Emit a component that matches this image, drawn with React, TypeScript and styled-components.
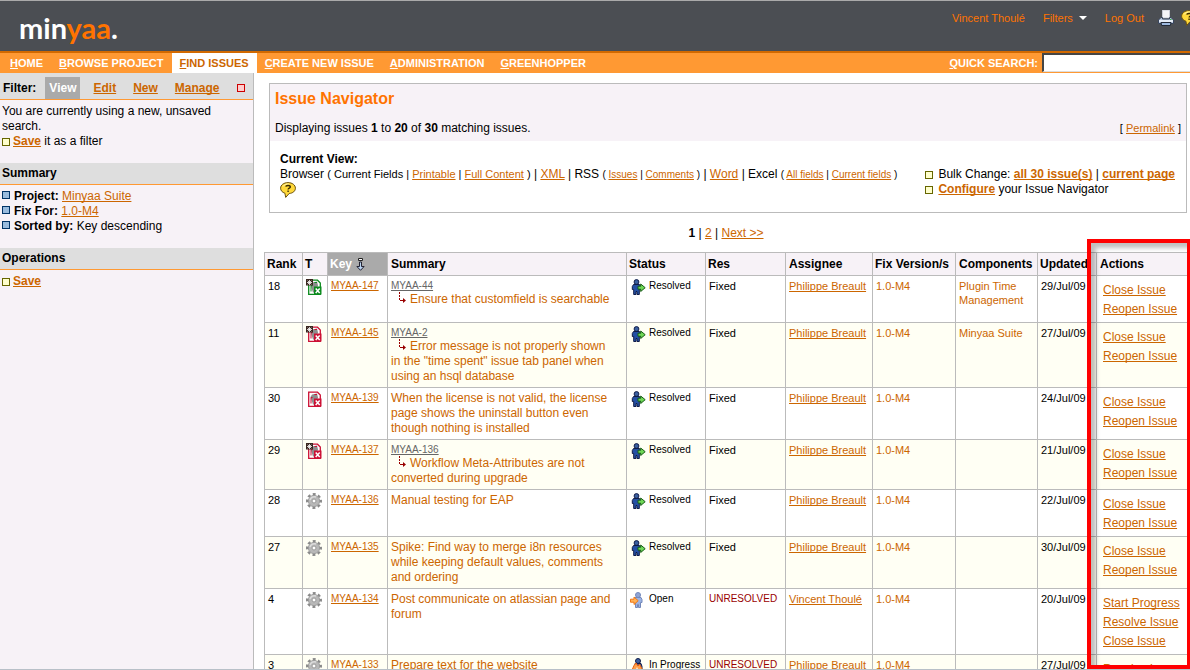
import React from 'react';
import styled, { createGlobalStyle, css } from 'styled-components';

const c = {
  link: '#cc6600',
  bright: '#ff7300',
  orange: '#ff9933',
  border: '#bbbbbb',
  tint: '#f7f2f7',
  bar: '#dedede',
  dark: '#4b4e53',
};

const GlobalStyle = createGlobalStyle`
  *, *::before, *::after { box-sizing: border-box; }
  body {
    margin: 0;
    font-family: "Liberation Sans", Arial, sans-serif;
    font-size: 12px;
    line-height: 15px;
    color: #000;
    background: #fff;
  }
  svg { display: block; flex: none; }
`;

const Link = styled.a<{ $bold?: boolean }>`
  color: ${c.link};
  font-weight: ${(p) => (p.$bold ? 'bold' : 'inherit')};
  text-decoration: underline;
  text-decoration-skip-ink: none;
`;

const Page = styled.div`
  display: flex;
  flex-direction: column;
  height: 100vh;
  overflow: hidden;
  border-top: 1px solid #aaaaaa;
  border-bottom: 1px solid #b8c0c8;
`;

/* Header */
const Header = styled.header`
  display: flex;
  justify-content: space-between;
  align-items: flex-start;
  flex: none;
  height: 52px;
  padding-left: 19px;
  overflow: hidden;
  background: ${c.dark};
  border-bottom: 2px solid #d26900;
`;
const Logo = styled.a`
  padding-top: 9px;
  font: bold 29px/36px Lato, sans-serif;
  color: #fff;
  text-decoration: none;
`;
const LogoAccent = styled.span`
  color: ${c.bright};
`;
const UserBar = styled.nav`
  display: flex;
  align-items: center;
  height: 34px;
  font-size: 11px;
  margin-right: -7px;
`;
const UserLink = styled.a`
  display: flex;
  align-items: center;
  gap: 6px;
  margin-right: 18px;
  color: ${c.bright};
  text-decoration: none;
`;
const IconTray = styled.div`
  display: flex;
  gap: 7px;
  margin-left: -4px;
`;

const NavBar = styled.nav`
  display: flex;
  flex: none;
  justify-content: space-between;
  height: 20px;
  padding-left: 2px;
  overflow: hidden;
  background: ${c.orange};
  font-size: 11px;
  font-weight: bold;
`;
const NavList = styled.div`
  display: flex;
`;
const NavItem = styled.a<{ $active?: boolean }>`
  padding: 0 8px;
  line-height: 21px;
  text-decoration: none;
  color: ${(p) => (p.$active ? c.link : '#fff')};
  background: ${(p) => (p.$active ? '#fff' : 'transparent')};
`;
const Access = styled.span`
  text-decoration: underline;
`;
const Search = styled.form`
  display: flex;
  gap: 4px;
  color: #fff;
  line-height: 21px;
`;
const SearchInput = styled.input`
  width: 148px;
  height: 19px;
  padding: 1px 4px;
  border: 2px inset #999;
  border-bottom: 1px solid #ddd;
  border-right: 0;
  background: #fff;
  font: 12px "Liberation Sans", Arial, sans-serif;
`;

const Columns = styled.div`
  display: flex;
  flex: 1;
  min-height: 0;
`;

/* Sidebar */
const Sidebar = styled.aside`
  flex: 0 0 254px;
  background: ${c.tint};
  border-right: 1px solid ${c.border};
`;
const FilterBar = styled.div`
  display: flex;
  align-items: flex-end;
  height: 27px;
  padding-left: 3px;
  background: ${c.bar};
  border-bottom: 1px solid ${c.orange};
  font-weight: bold;
  line-height: 22px;
`;
const FilterTitle = styled.span`
  margin-right: 9px;
`;
const FilterTab = styled.a<{ $active?: boolean }>`
  padding: 0 4px;
  margin-right: 9px;
  color: ${(p) => (p.$active ? '#fff' : c.link)};
  background: ${(p) => (p.$active ? '#aaaaaa' : 'transparent')};
  text-decoration: ${(p) => (p.$active ? 'none' : 'underline')};
  text-decoration-skip-ink: none;
`;
const squareTones = {
  red: ['#cc0000', '#ffcccc'],
  green: ['#666600', '#ffffcc'],
  blue: ['#003366', '#99bbdd'],
};
const Square = styled.i<{ $tone: keyof typeof squareTones }>`
  display: inline-block;
  flex: none;
  width: 8px;
  height: 8px;
  border: 1px solid ${(p) => squareTones[p.$tone][0]};
  background: ${(p) => squareTones[p.$tone][1]};
  ${(p) => p.$tone === 'blue' && css`margin: 0 1px 3px 0;`}
`;
const CloseButton = styled.button`
  display: flex;
  margin: 0 0 7px 4px;
  padding: 0;
  border: 0;
  background: none;
`;
const SideHeading = styled.h2`
  margin: 0;
  padding: 3px 2px;
  background: ${c.bar};
  border-bottom: 1px solid ${c.orange};
  font-size: 12px;
  line-height: 15px;
`;
const SideBody = styled.div`
  padding: 4px 2px 14px;
`;
const Line = styled.div`
  display: flex;
  align-items: center;
  gap: 3px;
`;

/* Main */
const Main = styled.main`
  display: flex;
  flex: 1;
  flex-direction: column;
  min-width: 0;
  padding: 10px 2px 0 10px;
  overflow: hidden;
`;
const Navigator = styled.section`
  flex: none;
  margin: 0 1px 0 5px;
  border: 1px solid ${c.border};
`;
const NavigatorHead = styled.div`
  padding: 5px;
  background: ${c.tint};
`;
const Title = styled.h1`
  margin: 0 0 12px;
  color: ${c.bright};
  font-size: 16px;
  line-height: 20px;
`;
const Between = styled.div`
  display: flex;
  justify-content: space-between;
`;
const Small = styled.span<{ $compact?: boolean }>`
  font-size: ${(p) => (p.$compact ? 10 : 11)}px;
`;
const ViewArea = styled.div`
  display: flex;
  justify-content: space-between;
  align-items: flex-end;
  padding: 11px 11px 14px 10px;
`;
const ViewTitle = styled.h3`
  margin: 0;
  font-size: 12px;
`;
const BulkList = styled.div`
  padding-bottom: 1px;
`;
const BulkLine = styled(Line)`
  gap: 5px;
`;
const Pager = styled.nav`
  flex: none;
  padding: 13px 0 11px;
  text-align: center;
`;

/* Issue table */
const TableArea = styled.div`
  position: relative;
  flex: 1;
  min-height: 0;
`;
const Table = styled.table`
  width: 100%;
  table-layout: fixed;
  border-collapse: collapse;
`;
const Col = styled.col<{ $w?: number }>`
  ${(p) => p.$w && css`width: ${p.$w}px;`}
`;
const Th = styled.th<{ $sorted?: boolean; $last?: boolean }>`
  padding: 4px 0 3px ${(p) => (p.$last ? 3 : 2)}px;
  border: 1px solid ${c.border};
  background: ${(p) => (p.$sorted ? '#aaaaaa' : c.tint)};
  color: ${(p) => (p.$sorted ? '#fff' : '#000')};
  text-align: left;
  white-space: nowrap;
`;
const SortLabel = styled.span`
  display: flex;
  align-items: center;
  gap: 4px;
`;
const Row = styled.tr<{ $alt: boolean }>`
  background: ${(p) => (p.$alt ? '#fffff4' : '#fff')};
`;
const Td = styled.td<{ $tone?: 'link' | 'red'; $compact?: boolean }>`
  padding: 3px 0 3px 3px;
  border: 1px solid ${c.border};
  vertical-align: top;
  font-size: ${(p) => (p.$compact ? 10 : 11)}px;
  line-height: 14px;
  white-space: nowrap;
  color: ${(p) => (p.$tone === 'link' ? c.link : p.$tone === 'red' ? '#990000' : '#000')};
`;
const SummaryCell = styled(Td)`
  padding-right: 10px;
  color: ${c.link};
  white-space: normal;
`;
const ParentLink = styled.a`
  display: block;
  width: max-content;
  font-size: 10px;
  line-height: 13px;
  color: #666;
  text-decoration-skip-ink: none;
`;
const SummaryText = styled.a`
  display: block;
  font-size: 12px;
  line-height: 15px;
  color: inherit;
  text-decoration: none;
  svg { display: inline-block; margin: 0 3px 0 6px; vertical-align: -1px; }
`;
const StatusLabel = styled.span`
  display: flex;
  gap: 3px;
`;
const ActionCell = styled(Td)`
  padding: 5px 0 3px 6px;
`;
const ActionLink = styled(Link)`
  display: block;
  width: max-content;
  font-size: 12px;
  line-height: 19px;
`;
const Highlight = styled.div`
  position: absolute;
  top: -13px;
  right: -3px;
  bottom: 0;
  width: 104px;
  border: 4px solid #ff0000;
  box-shadow: inset 5px 5px 4px rgba(0, 0, 0, 0.25);
  pointer-events: none;
`;

/* Icons */
const HelpIcon = () => (
  <svg width="16" height="16" viewBox="0 0 16 16">
    <path d="M8 .6C3.800.6.6 3 .6 6.200c0 2.400 1.700 4.200 4.300 5l.8 4.200 3.500-3.900c3.800-.3 6.200-2.500 6.200-5.300C15.400 3 12.200.6 8 .6z" fill="#ffd83a" stroke="#6b5210" />
    <path d="M3 4.500C4.200 2.300 7 1.800 9 2" stroke="#fff6b0" fill="none" />
    <path d="M5.800 4.700c.2-1.600 4.500-1.700 4.500.2 0 1.300-2.200 1.300-2.200 2.700M8.100 8.600v1.300" stroke="#3a2c00" strokeWidth="1.400" fill="none" />
  </svg>
);
const PrinterIcon = () => (
  <svg width="16" height="16" viewBox="0 0 16 16">
    <path d="M4.500 0h7v8h-7z" fill="#f4f4f8" stroke="#c9ccd6" />
    <path d="M3 7.500h1.500V9h7V7.500H13l2.500 2.500v3.500h-15V10z" fill="#b7c6dc" stroke="#39455c" />
    <path d="M1 11h14" stroke="#f5f8ff" strokeWidth="1.500" />
    <path d="M3 12.500h10l-.6 3H3.600z" fill="#9db9de" stroke="#222a38" />
    <path d="M12 9.500h1.500" stroke="#3fae4a" />
  </svg>
);
const CaretIcon = () => (
  <svg width="8" height="4" viewBox="0 0 8 4">
    <path d="M0 0h8L4 4z" fill="#fff" />
  </svg>
);
const SortIcon = () => (
  <svg width="9" height="13" viewBox="0 0 9 13">
    <path d="M2.500.5h4v2h-4z" fill="#fff" stroke="#222" />
    <path d="M3.500 4h2v4.500h2.600L4.500 12.300.9 8.500h2.600z" fill="#b9d4f2" stroke="#223" />
  </svg>
);
const ChildArrow = () => (
  <svg width="10" height="12" viewBox="0 0 10 12">
    <path d="M2.500 0v8" stroke="#990000" strokeDasharray="2 1" />
    <path d="M3 8.500h3" stroke="#990000" />
    <path d="M6 6l3 2.500L6 11z" fill="#990000" />
  </svg>
);
const PatchIcon = ({ color, star }: { color: string; star?: boolean }) => (
  <svg width="16" height="16" viewBox="0 0 16 16">
    <path d="M2.700 1.200h8.800l2.800 2.800v11.300H2.700z" fill="#fff" stroke={color} strokeWidth="1.300" />
    <path d="M4.500 6 6 3.500 11 2.500l1 4-2.500 7H7z" fill="#8d8d8d" />
    <path d="M5 12.500V6.500h1.500M8.500 3.500h2.500" stroke={color} fill="none" />
    <path d="M8 7.500h7.500v8H8z" fill={color} />
    <path d="M9.700 9.500l4 4.500m0-4.500l-4 4.500" stroke="#fff" strokeWidth="1.500" />
    {star && (
      <g>
        <path d="M0 0h7v6.500H0z" fill="#3a2620" />
        <path d="M3.500 1v5M1 3.500h5M1.700 1.700l3.600 3.600m0-3.600L1.700 5.300" stroke="#fff" strokeWidth=".8" />
      </g>
    )}
  </svg>
);
const GearIcon = () => (
  <svg width="16" height="16" viewBox="0 0 16 16">
    <circle cx="8" cy="8" r="6.800" fill="none" stroke="#8a8a8a" strokeWidth="2.400" strokeDasharray="2.900 2.441" strokeDashoffset="1.450" />
    <circle cx="8" cy="8" r="5.600" fill="#b8b8b8" stroke="#9c9c9c" />
    <path d="M4 7A4.500 4.500 0 0 1 10 4" stroke="#dcdcdc" strokeWidth="1.500" fill="none" />
    <circle cx="8" cy="8" r="2" fill="#fff" stroke="#9a9a9a" />
  </svg>
);
const ResolvedIcon = () => (
  <svg width="16" height="16" viewBox="0 0 16 16">
    <circle cx="6.500" cy="3" r="2.400" fill="#3b5fa0" stroke="#101c48" />
    <path d="M3.500 5.500h6l1 2v3H9.300v5H7v-3H6v3H3.700v-5H2.300v-3z" fill="#2450a4" stroke="#101c48" />
    <path d="M8 7.200h2.700V5l4.500 3.700-4.500 3.800v-2.300H8z" fill="#6fd857" stroke="#175c17" />
  </svg>
);
const OpenIcon = () => (
  <svg width="16" height="16" viewBox="0 0 16 16">
    <circle cx="8" cy="3" r="2.500" fill="#8fa5d6" stroke="#7388bb" />
    <path d="M5 5.500h6l1 2v3h-1.500v5H8.500v-3h-1v3h-2v-5H4v-3z" fill="#9db4e4" stroke="#7388bb" />
    <path d="M.5 7.200H4V5l4.200 3.700L4 12.500v-2.300H.5z" fill="#ffb257" stroke="#f07818" />
  </svg>
);
const ProgressIcon = () => (
  <svg width="16" height="16" viewBox="0 0 16 16">
    <circle cx="8" cy="3" r="2.500" fill="#3b5fa0" stroke="#101c48" />
    <path d="M5 5.500h6l1 3v7H5z" fill="#2450a4" stroke="#101c48" />
    <path d="M.5 15.500 4 7.500l2-2.500 2 3 1.500-2 5 9.500z" fill="#ffa04a" stroke="#e8600c" />
    <path d="M5 14l2-5 2 5z" fill="#fff" />
  </svg>
);

const typeIcons = {
  fixed: <PatchIcon color="#0b8a1d" star />,
  sub: <PatchIcon color="#cc1034" star />,
  bug: <PatchIcon color="#cc1034" />,
  task: <GearIcon />,
};
const statusIcons = {
  Resolved: <ResolvedIcon />,
  Open: <OpenIcon />,
  'In Progress': <ProgressIcon />,
};

type Issue = {
  rank: number;
  type: keyof typeof typeIcons;
  key: string;
  parent?: string;
  summary: string;
  status: keyof typeof statusIcons;
  assignee: string;
  components?: string[];
  updated: string;
};

const philippe = 'Philippe Breault';
const issues: Issue[] = [
  { rank: 18, type: 'fixed', key: 'MYAA-147', parent: 'MYAA-44', summary: 'Ensure that customfield is searchable', status: 'Resolved', assignee: philippe, components: ['Plugin Time', 'Management'], updated: '29/Jul/09' },
  { rank: 11, type: 'sub', key: 'MYAA-145', parent: 'MYAA-2', summary: 'Error message is not properly shown in the "time spent" issue tab panel when using an hsql database', status: 'Resolved', assignee: philippe, components: ['Minyaa Suite'], updated: '27/Jul/09' },
  { rank: 30, type: 'bug', key: 'MYAA-139', summary: 'When the license is not valid, the license page shows the uninstall button even though nothing is installed', status: 'Resolved', assignee: philippe, updated: '24/Jul/09' },
  { rank: 29, type: 'sub', key: 'MYAA-137', parent: 'MYAA-136', summary: 'Workflow Meta-Attributes are not converted during upgrade', status: 'Resolved', assignee: philippe, updated: '21/Jul/09' },
  { rank: 28, type: 'task', key: 'MYAA-136', summary: 'Manual testing for EAP', status: 'Resolved', assignee: philippe, updated: '22/Jul/09' },
  { rank: 27, type: 'task', key: 'MYAA-135', summary: 'Spike: Find way to merge i8n resources while keeping default values, comments and ordering', status: 'Resolved', assignee: philippe, updated: '30/Jul/09' },
  { rank: 4, type: 'task', key: 'MYAA-134', summary: 'Post communicate on atlassian page and forum', status: 'Open', assignee: 'Vincent Thoulé', updated: '20/Jul/09' },
  { rank: 3, type: 'task', key: 'MYAA-133', summary: 'Prepare text for the website', status: 'In Progress', assignee: philippe, updated: '27/Jul/09' },
];

const actions: Record<Issue['status'], string[]> = {
  Resolved: ['Close Issue', 'Reopen Issue'],
  Open: ['Start Progress', 'Resolve Issue', 'Close Issue'],
  'In Progress': ['Resolve Issue'],
};

const navItems = ['HOME', 'BROWSE PROJECT', 'FIND ISSUES', 'CREATE NEW ISSUE', 'ADMINISTRATION', 'GREENHOPPER'];
const columnWidths = [38, 25, 60, undefined, 79, 80, 87, 83, 82, 59, 91];

export default function App() {
  return (
    <Page>
      <GlobalStyle />
      <Header>
        <Logo href="#">min<LogoAccent>yaa</LogoAccent>.</Logo>
        <UserBar>
          <UserLink href="#">Vincent Thoulé</UserLink>
          <UserLink href="#">Filters <CaretIcon /></UserLink>
          <UserLink href="#">Log Out</UserLink>
          <IconTray>
            <a href="#" aria-label="Print"><PrinterIcon /></a>
            <a href="#" aria-label="Help"><HelpIcon /></a>
          </IconTray>
        </UserBar>
      </Header>
      <NavBar>
        <NavList>
          {navItems.map((n) => (
            <NavItem key={n} href="#" $active={n === 'FIND ISSUES'}>
              <Access>{n[0]}</Access>{n.slice(1)}
            </NavItem>
          ))}
        </NavList>
        <Search>
          <label htmlFor="quick"><Access>Q</Access>UICK SEARCH:</label>
          <SearchInput id="quick" type="text" />
        </Search>
      </NavBar>
      <Columns>
        <Sidebar>
          <FilterBar>
            <FilterTitle>Filter:</FilterTitle>
            <FilterTab href="#" $active>View</FilterTab>
            <FilterTab href="#">Edit</FilterTab>
            <FilterTab href="#">New</FilterTab>
            <FilterTab href="#">Manage</FilterTab>
            <CloseButton type="button" aria-label="Hide"><Square $tone="red" /></CloseButton>
          </FilterBar>
          <SideBody>
            You are currently using a new, unsaved search.
            <Line><Square $tone="green" /><span><Link href="#" $bold>Save</Link> it as a filter</span></Line>
          </SideBody>
          <SideHeading>Summary</SideHeading>
          <SideBody>
            <Line><Square $tone="blue" /><span><b>Project:</b> <Link href="#">Minyaa Suite</Link></span></Line>
            <Line><Square $tone="blue" /><span><b>Fix For:</b> <Link href="#">1.0-M4</Link></span></Line>
            <Line><Square $tone="blue" /><span><b>Sorted by:</b> Key descending</span></Line>
          </SideBody>
          <SideHeading>Operations</SideHeading>
          <SideBody>
            <Line><Square $tone="green" /><Link href="#" $bold>Save</Link></Line>
          </SideBody>
        </Sidebar>
        <Main>
          <Navigator>
            <NavigatorHead>
              <Title>Issue Navigator</Title>
              <Between>
                <span>Displaying issues <b>1</b> to <b>20</b> of <b>30</b> matching issues.</span>
                <Small>[ <Link href="#">Permalink</Link> ]</Small>
              </Between>
            </NavigatorHead>
            <ViewArea>
              <div>
                <ViewTitle>Current View:</ViewTitle>
                <div>
                  Browser <Small>( Current Fields | <Link href="#">Printable</Link> | <Link href="#">Full Content</Link> )</Small> | <Link href="#">XML</Link> | RSS <Small $compact>( <Link href="#">Issues</Link> | <Link href="#">Comments</Link> )</Small> | <Link href="#">Word</Link> | Excel <Small $compact>( <Link href="#">All fields</Link> | <Link href="#">Current fields</Link> )</Small>
                </div>
                <HelpIcon />
              </div>
              <BulkList>
                <BulkLine><Square $tone="green" /><span>Bulk Change: <Link href="#" $bold>all 30 issue(s)</Link> | <Link href="#" $bold>current page</Link></span></BulkLine>
                <BulkLine><Square $tone="green" /><span><Link href="#" $bold>Configure</Link> your Issue Navigator</span></BulkLine>
              </BulkList>
            </ViewArea>
          </Navigator>
          <Pager><b>1</b> | <Link href="#">2</Link> | <Link href="#">Next &gt;&gt;</Link></Pager>
          <TableArea>
            <Table>
              <colgroup>
                {columnWidths.map((w, i) => <Col key={i} $w={w} />)}
              </colgroup>
              <thead>
                <tr>
                  <Th>Rank</Th>
                  <Th>T</Th>
                  <Th $sorted><SortLabel>Key <SortIcon /></SortLabel></Th>
                  <Th $last>Summary</Th>
                  <Th>Status</Th>
                  <Th>Res</Th>
                  <Th $last>Assignee</Th>
                  <Th>Fix Version/s</Th>
                  <Th $last>Components</Th>
                  <Th>Updated</Th>
                  <Th $last>Actions</Th>
                </tr>
              </thead>
              <tbody>
                {issues.map((it, i) => (
                  <Row key={it.key} $alt={i % 2 === 1}>
                    <Td>{it.rank}</Td>
                    <Td>{typeIcons[it.type]}</Td>
                    <Td $compact><Link href="#">{it.key}</Link></Td>
                    <SummaryCell>
                      {it.parent && <ParentLink href="#">{it.parent}</ParentLink>}
                      <SummaryText href="#">{it.parent && <ChildArrow />}{it.summary}</SummaryText>
                    </SummaryCell>
                    <Td $compact><StatusLabel>{statusIcons[it.status]}{it.status}</StatusLabel></Td>
                    {it.status === 'Resolved' ? <Td>Fixed</Td> : <Td $compact $tone="red">UNRESOLVED</Td>}
                    <Td><Link href="#">{it.assignee}</Link></Td>
                    <Td $tone="link">1.0-M4</Td>
                    <Td $tone="link">{it.components?.map((n) => <div key={n}>{n}</div>)}</Td>
                    <Td>{it.updated}</Td>
                    <ActionCell>
                      {actions[it.status].map((a) => <ActionLink key={a} href="#">{a}</ActionLink>)}
                    </ActionCell>
                  </Row>
                ))}
              </tbody>
            </Table>
            <Highlight />
          </TableArea>
        </Main>
      </Columns>
    </Page>
  );
}
